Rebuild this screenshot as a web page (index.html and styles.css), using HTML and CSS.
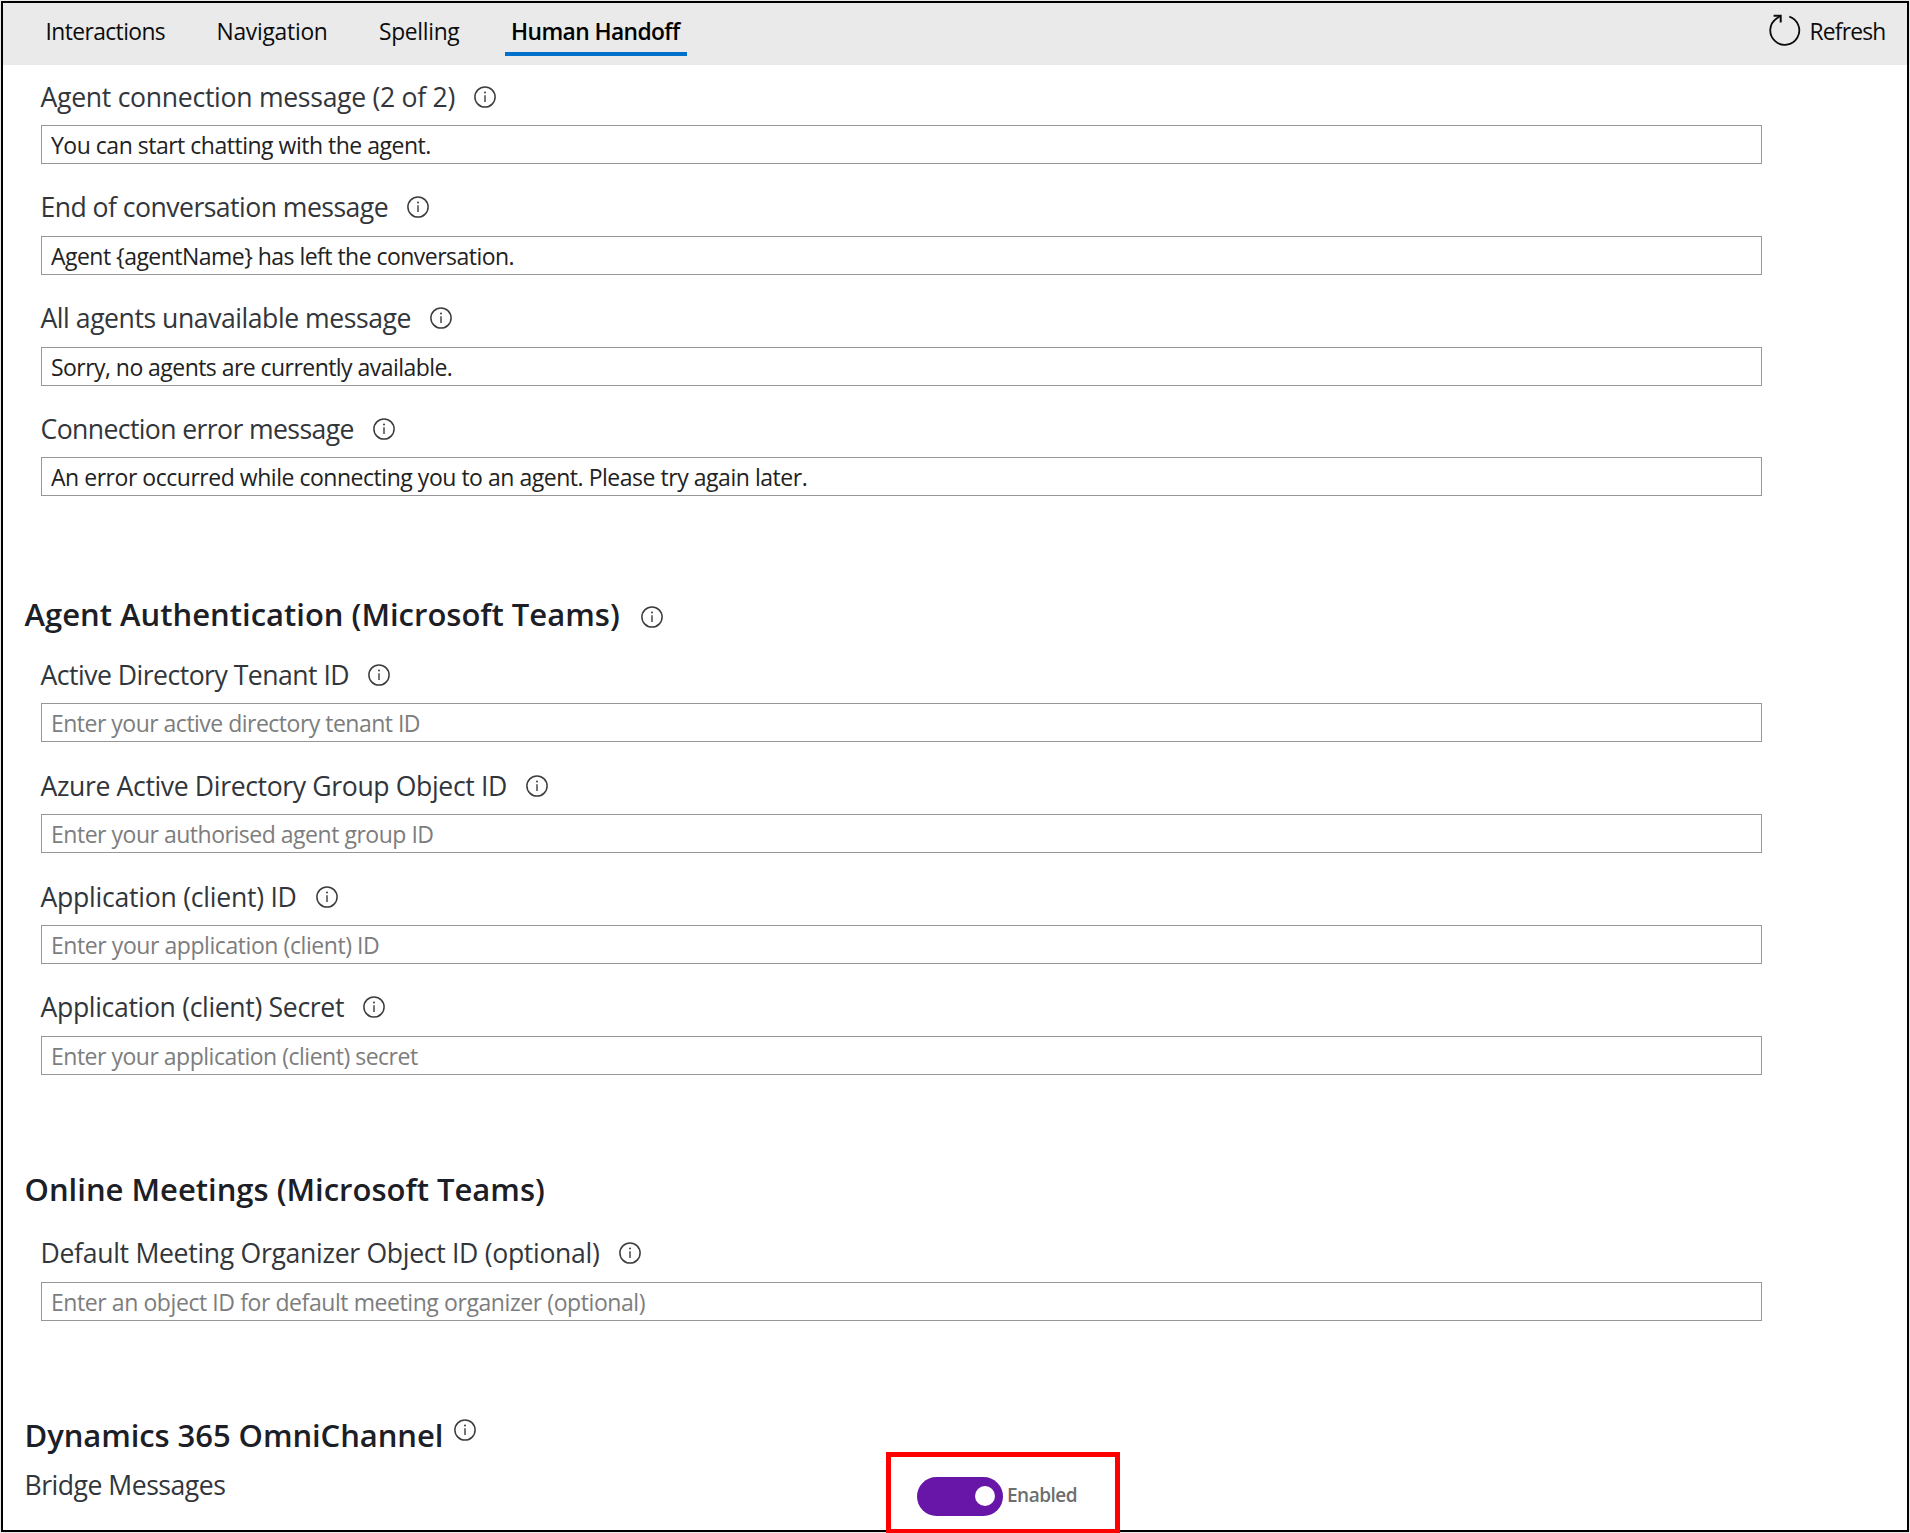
FILE: index.html
```
<!DOCTYPE html>
<html lang="en">
<head>
<meta charset="utf-8">
<title>Human Handoff settings</title>
<link rel="stylesheet" href="styles.css">
</head>
<body>
<svg class="sprite" aria-hidden="true">
  <symbol id="icon-info" viewBox="0 0 22 22">
    <circle cx="11" cy="11" r="10.1" fill="none" stroke="currentColor" stroke-width="1.5"/>
    <path d="M11 9.2V16" fill="none" stroke="currentColor" stroke-width="1.4"/>
    <circle cx="11" cy="6.6" r="1" fill="currentColor"/>
  </symbol>
</svg>
<div class="frame">
  <header class="topbar">
    <nav class="tabs">
      <a class="tab tab-interactions">Interactions</a>
      <a class="tab tab-navigation">Navigation</a>
      <a class="tab tab-spelling">Spelling</a>
      <a class="tab tab-handoff active">Human Handoff</a>
    </nav>
    <button class="refresh" type="button">
      <svg class="refresh-icon" viewBox="0 0 32 32" fill="none" stroke="currentColor" stroke-width="1.8">
        <path d="M20.3 2.6A14.5 14.5 0 1 1 7.6 4.4L11.4 1.9"/>
        <path d="M4.6 1.7H11.7V8.4" stroke-width="2"/>
      </svg>
      <span>Refresh</span>
    </button>
  </header>

  <main class="content">
    <section class="fields">
      <div class="field field-connected">
        <div class="label"><label>Agent connection message (2 of 2)</label><svg class="info"><use href="#icon-info"/></svg></div>
        <input type="text" value="You can start chatting with the agent.">
      </div>
      <div class="field field-ended">
        <div class="label"><label>End of conversation message</label><svg class="info"><use href="#icon-info"/></svg></div>
        <input type="text" value="Agent {agentName} has left the conversation.">
      </div>
      <div class="field field-unavailable">
        <div class="label"><label>All agents unavailable message</label><svg class="info"><use href="#icon-info"/></svg></div>
        <input type="text" value="Sorry, no agents are currently available.">
      </div>
      <div class="field field-error">
        <div class="label"><label>Connection error message</label><svg class="info"><use href="#icon-info"/></svg></div>
        <input type="text" value="An error occurred while connecting you to an agent. Please try again later.">
      </div>
    </section>

    <h2 class="heading heading-auth"><span>Agent Authentication (Microsoft Teams)</span><svg class="info"><use href="#icon-info"/></svg></h2>
    <section class="fields">
      <div class="field field-tenant">
        <div class="label"><label>Active Directory Tenant ID</label><svg class="info"><use href="#icon-info"/></svg></div>
        <input type="text" placeholder="Enter your active directory tenant ID">
      </div>
      <div class="field field-group">
        <div class="label"><label>Azure Active Directory Group Object ID</label><svg class="info"><use href="#icon-info"/></svg></div>
        <input type="text" placeholder="Enter your authorised agent group ID">
      </div>
      <div class="field field-client">
        <div class="label"><label>Application (client) ID</label><svg class="info"><use href="#icon-info"/></svg></div>
        <input type="text" placeholder="Enter your application (client) ID">
      </div>
      <div class="field field-secret">
        <div class="label"><label>Application (client) Secret</label><svg class="info"><use href="#icon-info"/></svg></div>
        <input type="text" placeholder="Enter your application (client) secret">
      </div>
    </section>

    <h2 class="heading heading-meetings"><span>Online Meetings (Microsoft Teams)</span></h2>
    <section class="fields">
      <div class="field field-organizer">
        <div class="label"><label>Default Meeting Organizer Object ID (optional)</label><svg class="info"><use href="#icon-info"/></svg></div>
        <input type="text" placeholder="Enter an object ID for default meeting organizer (optional)">
      </div>
    </section>

    <h2 class="heading heading-omni"><span>Dynamics 365 OmniChannel</span><svg class="info"><use href="#icon-info"/></svg></h2>
    <div class="bridge">
      <span class="bridge-label">Bridge Messages</span>
      <div class="highlight">
        <span class="toggle"><span class="knob"></span></span>
        <span class="state">Enabled</span>
      </div>
    </div>
  </main>
</div>
</body>
</html>
```
FILE: styles.css
```
* { box-sizing: border-box; }

body {
  margin: 0;
  padding: 1px;
  height: 1533px;
  overflow: hidden;
  background: #e9e9e9;
  font-family: "Segoe UI", "Open Sans", "Noto Sans", sans-serif;
  color: #32363b;
}

.sprite { display: none; }

.frame {
  width: 1908px;
  height: 1531px;
  border: 2px solid #000;
  background: #fff;
}

/* Top bar */
.topbar {
  display: flex;
  justify-content: space-between;
  height: 62px;
  padding: 0 21.5px 0 36.5px;
  background: #eaeaea;
  color: #0c0c0c;
  font-size: 22.8px;
}

.tabs { display: flex; gap: 39px; }

.tab {
  height: 53px;
  padding: 6px 6px 0;
  border-bottom: 4px solid transparent;
  line-height: 45px;
  white-space: nowrap;
}

.tab-interactions { width: 132px; letter-spacing: -0.58px; }
.tab-navigation { width: 123.5px; letter-spacing: -0.25px; }
.tab-spelling { width: 93px; letter-spacing: -0.31px; }
.tab-handoff { width: 182px; letter-spacing: -0.6px; }
.tab.active { border-bottom-color: #0070cc; color: #000; font-weight: 600; }

.refresh {
  display: flex;
  gap: 9px;
  padding: 6px 0 0;
  border: 0;
  background: none;
  color: inherit;
  font: inherit;
  line-height: 45px;
  height: 51px;
  letter-spacing: -0.8px;
}

.refresh-icon { width: 32px; height: 32px; margin-top: 5px; }

/* Form */
.content { padding-top: 14px; }

.field {
  height: 110.8px;
  padding-left: 37.5px;
}

.label {
  display: flex;
  align-items: center;
  gap: 19px;
  height: 36px;
  margin-bottom: 10px;
  font-size: 26.6px;
  line-height: 37px;
  white-space: nowrap;
}

.info {
  flex: none;
  width: 22px;
  height: 22px;
  margin-bottom: 1px;
  color: #3c3c3c;
}

.field input {
  display: block;
  width: 1721px;
  height: 39px;
  padding: 1px 9.5px 0;
  border: 1px solid #979797;
  border-radius: 0;
  background: #fff;
  color: #222;
  font: 23px/36px "Segoe UI", "Open Sans", "Noto Sans", sans-serif;
}

.field input::placeholder { color: #7d7d7d; opacity: 1; }

.field-connected label { letter-spacing: -0.29px; }
.field-connected input { letter-spacing: -0.49px; }
.field-ended label { letter-spacing: -0.54px; }
.field-ended input { letter-spacing: -0.53px; }
.field-unavailable label { letter-spacing: -0.46px; }
.field-unavailable input { letter-spacing: -0.55px; }
.field-error label { letter-spacing: -0.61px; }
.field-error input { letter-spacing: -0.47px; }
.field-tenant label { letter-spacing: -0.52px; }
.field-tenant input { letter-spacing: -0.51px; }
.field-group label { letter-spacing: -0.37px; }
.field-group input { letter-spacing: -0.48px; }
.field-client label { letter-spacing: -0.25px; }
.field-client input { letter-spacing: -0.43px; }
.field-secret label { letter-spacing: -0.34px; }
.field-secret input { letter-spacing: -0.49px; }
.field-organizer label { letter-spacing: -0.31px; }
.field-organizer input { letter-spacing: -0.42px; }

.heading {
  display: flex;
  align-items: center;
  margin: 0;
  padding-left: 21.5px;
  color: #1c2026;
  font-size: 31px;
  font-weight: 600;
  line-height: 44px;
  white-space: nowrap;
}

.heading-auth { gap: 21px; margin: 70.3px 0 21px; }
.heading-auth .info { margin-top: 5px; margin-bottom: 0; }
.heading-meetings { margin: 66.5px 0 24.5px; }
.heading-omni { gap: 10.5px; margin: 66.5px 0 0; letter-spacing: -0.07px; }
.heading-omni .info { margin-bottom: 10px; }

.bridge { display: flex; height: 77px; padding-left: 21.5px; }

.bridge-label {
  width: 861.5px;
  margin-top: 10px;
  font-size: 26.6px;
  line-height: 37px;
  letter-spacing: -0.5px;
}

/* Callout box around the switch; covers the bottom edge of the frame */
.highlight {
  display: flex;
  flex: none;
  width: 234px;
  height: 82px;
  margin-top: -5px;
  padding: 20px 0 0 26px;
  border: 5px solid #f00;
}

.toggle {
  display: flex;
  align-items: center;
  justify-content: flex-end;
  width: 86px;
  height: 39px;
  padding-right: 8px;
  border-radius: 20px;
  background: #6716a8;
}

.knob { width: 20px; height: 20px; border-radius: 50%; background: #fff; }

.state {
  margin-left: 4px;
  color: #6e6e6e;
  font-size: 19px;
  font-weight: 600;
  line-height: 36px;
  letter-spacing: -0.5px;
}
```
